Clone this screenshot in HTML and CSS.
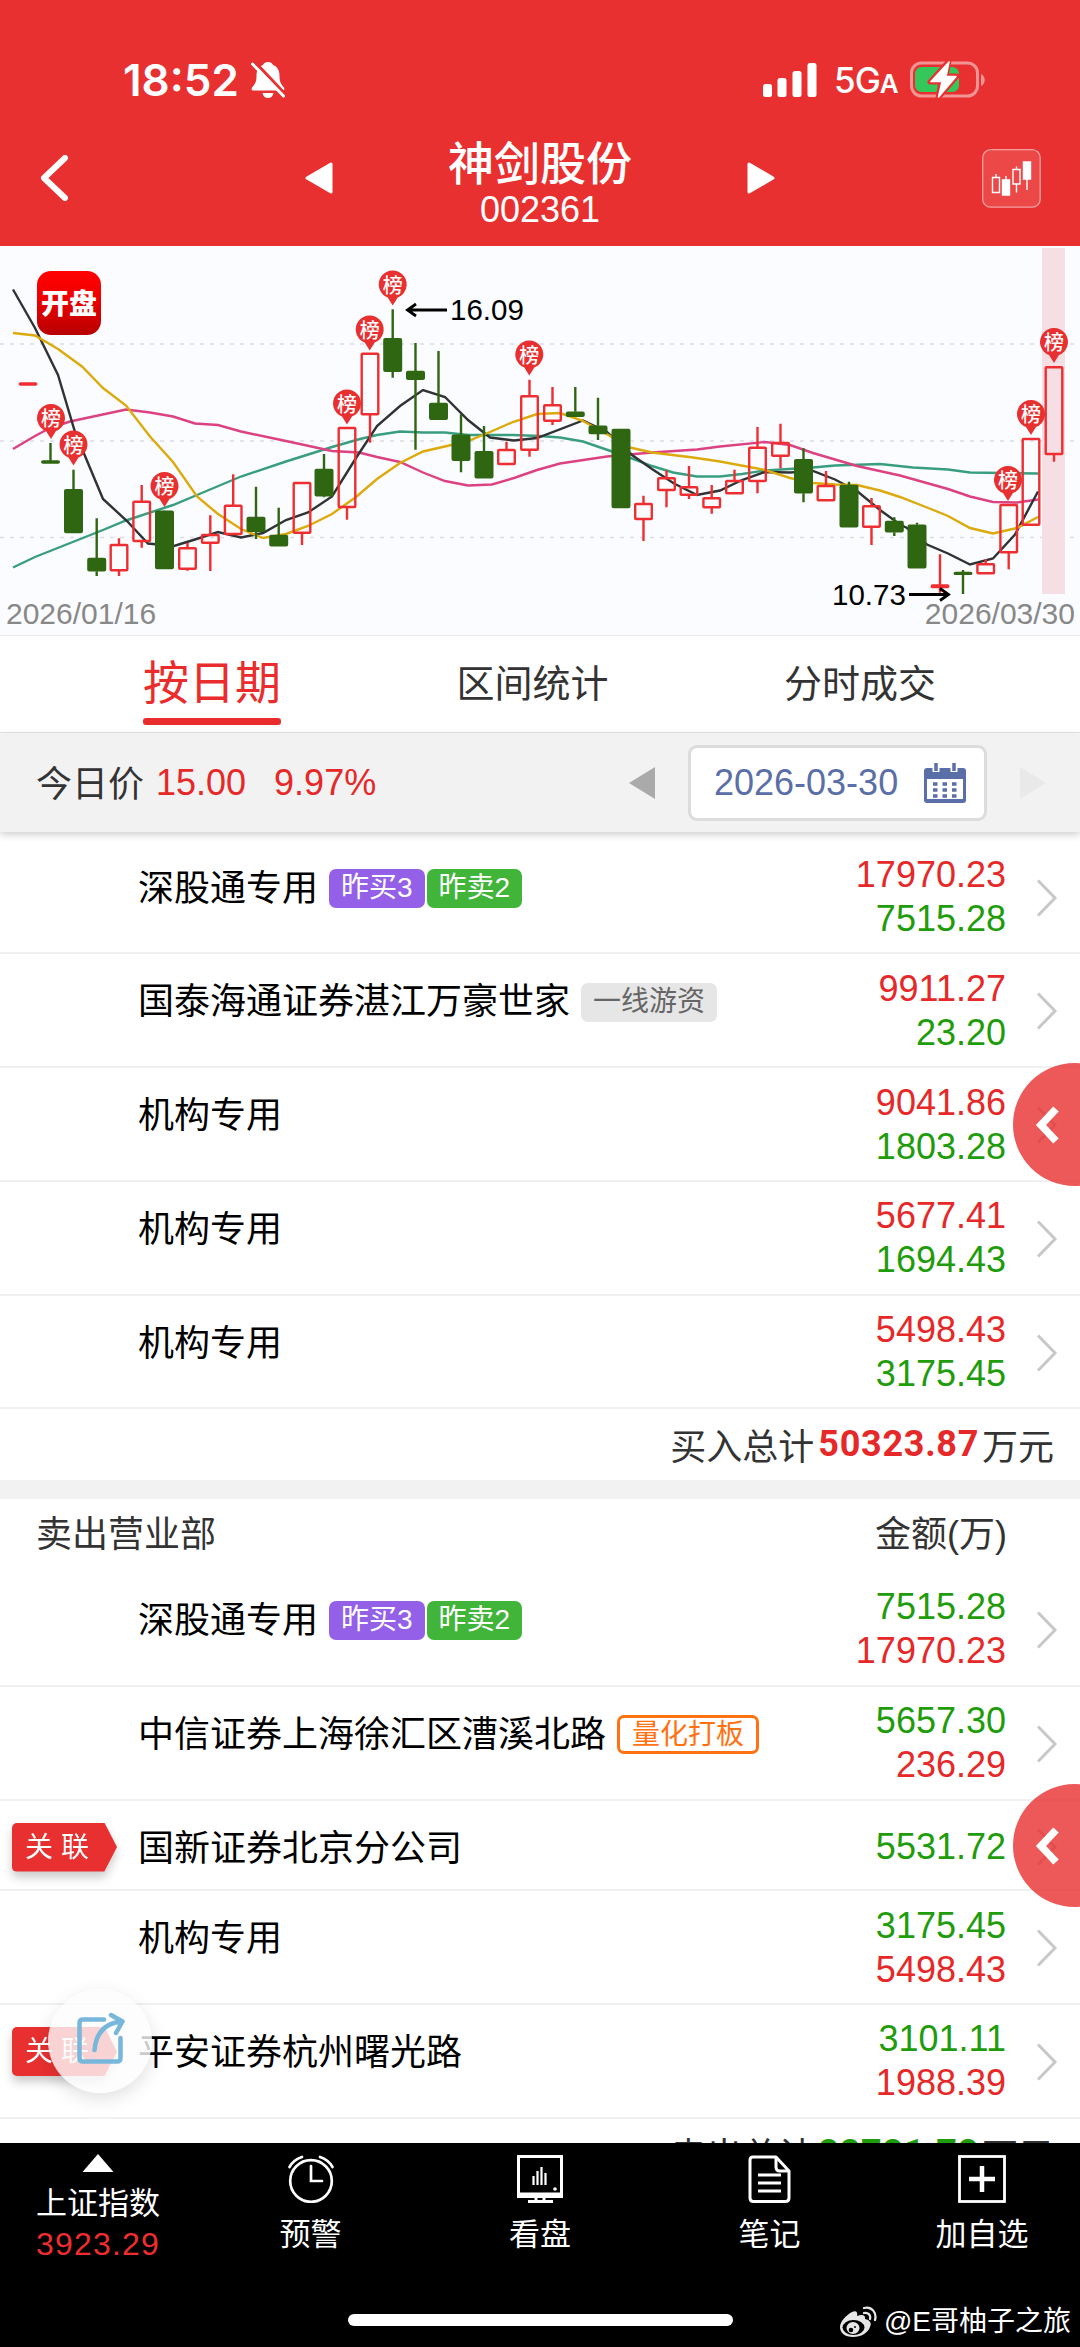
FILE: index.html
```html
<!DOCTYPE html>
<html lang="zh-CN">
<head>
    <meta charset="UTF-8">
    <meta name="viewport" content="width=device-width, initial-scale=1.0">
    <title>神剑股份 002361</title>
    <link rel="stylesheet" href="styles.css">
</head>
<body>
    <div class="page">
        <header class="header">
            <div class="status">
                <span class="time">18:52</span>
                <svg class="bell" width="36" height="40" viewBox="0 0 36 40">
                    <path d="M18 2c-3 0-4.500 1.500-5 3C8 7 6.500 11 6.500 16c0 7-2 8-4.500 11.500C1.200 29 1.600 30.500 3.500 30.500h29c2 0 2.300-1.500 1.300-3C31.500 24 29.500 23 29.500 16c0-5-1.500-9-6.500-11-.500-1.500-2-3-5-3zM12.500 33h11c-.500 3-2.500 5-5.500 5s-5-2-5.500-5z" fill="#fff"/>
                    <path d="M5 2l31 33" stroke="#e83030" stroke-width="3"/>
                    <path d="M2.500 4l31 32" stroke="#fff" stroke-width="3" stroke-linecap="round"/>
                </svg>
                <svg class="signal" width="54" height="34" viewBox="0 0 54 34" fill="#fff">
                    <rect x="0" y="21" width="9" height="13" rx="2.500"/>
                    <rect x="14.500" y="15" width="9" height="19" rx="2.500"/>
                    <rect x="29.500" y="8" width="9" height="26" rx="2.500"/>
                    <rect x="44.500" y="0" width="9" height="34" rx="2.500"/>
                </svg>
                <span class="network">5G<small>A</small></span>
                <svg class="battery" width="78" height="40" viewBox="0 0 78 40">
                    <rect x="2.500" y="3" width="66" height="33" rx="10" fill="none" stroke="#f39393" stroke-width="3"/>
                    <path d="M72 14c5 2 5 10 0 12z" fill="#f39393"/>
                    <rect x="6" y="7" width="44" height="25" rx="6.500" fill="#34c759"/>
                    <path d="M40 1L21 22h11l-3 16 19-22H37z" fill="#fff" stroke="#e83030" stroke-width="5" stroke-linejoin="round"/>
                    <path d="M40 2L22 21.500h11L29.500 37 47 16.500H37z" fill="#fff" stroke="#fff" stroke-width="1.500" stroke-linejoin="round"/>
                </svg>
            </div>
            <div class="nav">
                <svg class="back" width="32" height="46" viewBox="0 0 32 46"><path d="M27 3L6 23l21 20" fill="none" stroke="#fff" stroke-width="6" stroke-linecap="round" stroke-linejoin="round"/></svg>
                <svg class="prev" width="28" height="32" viewBox="0 0 28 32"><path d="M26 2v28L2 16z" fill="#fff" stroke="#fff" stroke-width="3" stroke-linejoin="round"/></svg>
                <div class="stock">
                    <h1>神剑股份</h1>
                    <p>002361</p>
                </div>
                <svg class="next" width="28" height="32" viewBox="0 0 28 32"><path d="M2 2v28l24-14z" fill="#fff" stroke="#fff" stroke-width="3" stroke-linejoin="round"/></svg>
                <svg class="kline" width="59" height="59" viewBox="0 0 59 59">
                    <rect x=".7" y=".7" width="57.500" height="57.500" rx="8" fill="#ec4848" stroke="#f4a0a0" stroke-width="1.300"/>
                    <g fill="none" stroke="#fff" stroke-width="1.400">
                        <path d="M10.500 28.500h7v15h-7zM14 25v3M31 20.500h7v14.500h-7zM34.500 17.500v3M34.500 35v8.500M24 27v4M45 30v11"/>
                        <path d="M20.500 31h7v15h-7zM41.500 13h7v17h-7z" fill="#fff"/>
                    </g>
                </svg>
            </div>
        </header>

        <svg id="chart" class="chart" width="1080" height="389" viewBox="0 246 1080 389">
            <defs>
                <linearGradient id="logo" x1="0" y1="0" x2="0" y2="1">
                    <stop offset="0" stop-color="#ff0202"/>
                    <stop offset=".4" stop-color="#f00000"/>
                    <stop offset="1" stop-color="#b80000"/>
                </linearGradient>
            </defs>
            <path class="gridline" d="M0 344H1080M0 441H1080M0 537.500H1080"/>
            <rect x="1042" y="248" width="23" height="346" fill="#f6dfe4"/>
            <polyline class="ma ma60" points="13,567.5 35,557 103,530 126,520.5 173,505 197,495 241,476.5 286,461.5 332,447 360,439 377,435 400,431.5 423,432.5 445,432.5 468,435 513,435 540,436 560,437.5 583,441.5 612,451.5 632,458.5 652,466 673,472.5 697,476.5 720,476.5 742,474 765,470.5 813,467.5 835,465.5 880,464 913,467.5 948,469.5 970,472.5 1038,473.5"/>
            <polyline class="ma ma20" points="13,449 35,436 50,428 70,421.5 126,409.5 150,412.5 173,416.5 195,423.5 218,425 241,431.5 286,441 332,451 359,452.5 377,457 400,462 423,472.5 445,481 468,485.5 492,484.5 514,478 537,470 560,463.5 607,456.5 652,452.5 697,449.5 720,446.5 765,442 790,445 813,453 857,466 900,475.5 948,489 970,496.5 993,502 1017,502.5 1038,499.5"/>
            <polyline class="ma ma5" points="13,289.5 35,328 58,375 75,432 103,499 127,521 148,543.5 174,546 195,539.5 218,532 241,537.5 263,533 286,520 308,512.5 332,496.5 356,458 377,426 400,406 423,390 445,397 468,420 490,437.5 514,440.5 537,438 583,420.5 607,432 632,455 652,469 674,483.5 697,495 720,490.5 742,480 765,472 790,472.5 813,471 835,479.5 857,491 880,510 900,524.5 907,528 927,544.5 948,553.5 970,564.5 993,558.5 1015,534.5 1038,491.5"/>
            <polyline class="ma ma10" points="13,333 35,335.5 58,349 82,366.5 103,388 126,405.5 150,436.5 173,462 197,496.5 218,514 241,529 263,538 286,534 308,526 332,514 356,497 377,479 400,463 423,451.5 447,446 468,441 490,432 513,422 537,414 560,413 582,420.5 612,437 630,447.5 652,452.5 693,457.5 720,461.5 765,470 790,478 813,483 835,484.5 857,485 880,490.5 900,497 927,507.5 948,516 970,528 993,533.5 1017,528 1038,517"/>
            <g id="candles"></g>
            <g id="pins"></g>
            <rect x="37" y="271" width="64" height="64" rx="14" fill="url(#logo)"/>
            <text class="logo-text" x="69" y="314">开盘</text>
            <path class="arrow" d="M447 310h-39M416 304l-8.500 6 8.500 6"/>
            <text class="price" x="450" y="319.500">16.09</text>
            <path class="arrow" d="M909 594.500h39M940 588.500l8.500 6-8.500 6"/>
            <text class="price" x="832" y="604.500">10.73</text>
            <text class="date" x="6" y="624">2026/01/16</text>
            <text class="date" x="1075" y="624" text-anchor="end">2026/03/30</text>
        </svg>

        <nav class="tabs">
            <span class="tab active">按日期</span>
            <span class="tab">区间统计</span>
            <span class="tab">分时成交</span>
        </nav>

        <div class="today">
            <span class="today-label">今日价</span>
            <span class="up">15.00</span>
            <span class="up percent">9.97%</span>
            <svg class="day-prev" width="28" height="34" viewBox="0 0 28 34"><path d="M27 1v32L1 17z" fill="#aaa"/></svg>
            <div class="picker">
                <span>2026-03-30</span>
                <svg width="42" height="40" viewBox="0 0 42 40">
                    <path d="M3 5h36q3 0 3 3v29q0 3-3 3H3q-3 0-3-3V8q0-3 3-3z" fill="#5a6fa8"/>
                    <path d="M3 16h36v20H3z" fill="#fff"/>
                    <path d="M12 0v9M30 0v9" stroke="#fff" stroke-width="7"/>
                    <path d="M12 0v8M30 0v8" stroke="#5a6fa8" stroke-width="3.500"/>
                    <path d="M9 21h24M9 27h24M9 33h24" stroke="#5a6fa8" stroke-width="3.500" stroke-dasharray="4.500 5"/>
                </svg>
            </div>
            <svg class="day-next" width="28" height="34" viewBox="0 0 28 34"><path d="M1 1v32l26-16z" fill="#e9e9e9"/></svg>
        </div>

        <main class="content">
            <section class="list">
                <div class="row">
                    <div class="name">深股通专用<i class="tag purple">昨买3</i><i class="tag green">昨卖2</i></div>
                    <div class="amount"><p class="up">17970.23</p><p class="down">7515.28</p></div>
                    <svg class="chevron" viewBox="0 0 22 38"><path d="M2 1.500L19 19 2 36.500"/></svg>
                </div>
                <div class="row">
                    <div class="name">国泰海通证券湛江万豪世家<i class="tag gray">一线游资</i></div>
                    <div class="amount"><p class="up">9911.27</p><p class="down">23.20</p></div>
                    <svg class="chevron" viewBox="0 0 22 38"><path d="M2 1.500L19 19 2 36.500"/></svg>
                </div>
                <div class="row">
                    <div class="name">机构专用</div>
                    <div class="amount"><p class="up">9041.86</p><p class="down">1803.28</p></div>
                    <svg class="chevron" viewBox="0 0 22 38"><path d="M2 1.500L19 19 2 36.500"/></svg>
                </div>
                <div class="row">
                    <div class="name">机构专用</div>
                    <div class="amount"><p class="up">5677.41</p><p class="down">1694.43</p></div>
                    <svg class="chevron" viewBox="0 0 22 38"><path d="M2 1.500L19 19 2 36.500"/></svg>
                </div>
                <div class="row">
                    <div class="name">机构专用</div>
                    <div class="amount"><p class="up">5498.43</p><p class="down">3175.45</p></div>
                    <svg class="chevron" viewBox="0 0 22 38"><path d="M2 1.500L19 19 2 36.500"/></svg>
                </div>
                <div class="total">买入总计<b class="up">50323.87</b>万元</div>
            </section>

            <section class="list sell">
                <div class="list-head"><span>卖出营业部</span><span>金额(万)</span></div>
                <div class="row">
                    <div class="name">深股通专用<i class="tag purple">昨买3</i><i class="tag green">昨卖2</i></div>
                    <div class="amount"><p class="down">7515.28</p><p class="up">17970.23</p></div>
                    <svg class="chevron" viewBox="0 0 22 38"><path d="M2 1.500L19 19 2 36.500"/></svg>
                </div>
                <div class="row">
                    <div class="name">中信证券上海徐汇区漕溪北路<i class="tag orange">量化打板</i></div>
                    <div class="amount"><p class="down">5657.30</p><p class="up">236.29</p></div>
                    <svg class="chevron" viewBox="0 0 22 38"><path d="M2 1.500L19 19 2 36.500"/></svg>
                </div>
                <div class="row single">
                    <div class="linked"><span>关联</span></div>
                    <div class="name">国新证券北京分公司</div>
                    <div class="amount"><p class="down">5531.72</p></div>
                    <svg class="chevron" viewBox="0 0 22 38"><path d="M2 1.500L19 19 2 36.500"/></svg>
                </div>
                <div class="row">
                    <div class="name">机构专用</div>
                    <div class="amount"><p class="down">3175.45</p><p class="up">5498.43</p></div>
                    <svg class="chevron" viewBox="0 0 22 38"><path d="M2 1.500L19 19 2 36.500"/></svg>
                </div>
                <div class="row">
                    <div class="linked"><span>关联</span></div>
                    <div class="name">平安证券杭州曙光路</div>
                    <div class="amount"><p class="down">3101.11</p><p class="up">1988.39</p></div>
                    <svg class="chevron" viewBox="0 0 22 38"><path d="M2 1.500L19 19 2 36.500"/></svg>
                </div>
                <div class="total">卖出总计<b class="down">22721.72</b>万元</div>
            </section>
        </main>

        <footer class="footer">
            <div class="item index">
                <svg width="32" height="18" viewBox="0 0 32 18"><path d="M16 0l15.500 18H.5z" fill="#fff"/></svg>
                <span>上证指数</span>
                <span class="index-value">3923.29</span>
            </div>
            <div class="item">
                <svg width="48" height="48" viewBox="0 0 48 48" fill="none" stroke="#fff" stroke-width="2.700" stroke-linecap="round">
                    <circle cx="24" cy="26" r="20.800"/>
                    <path d="M24 11v15h11M2.500 12C5 7.500 9 4 15 2M45.500 12C43 7.500 39 4 33 2"/>
                </svg>
                <span>预警</span>
            </div>
            <div class="item">
                <svg width="48" height="48" viewBox="0 0 48 48" fill="none" stroke="#fff" stroke-width="3">
                    <path d="M2.500 1.500h43v40h-43zM2 39h44M20 42v4M28 42v4M12 46.500h25"/>
                    <path d="M17.500 30v-9M21.500 30V16M25.500 30V12M29.500 30V18" stroke-width="2.200"/>
                    <circle cx="39" cy="34" r="1.800" fill="#fff" stroke="none"/>
                </svg>
                <span>看盘</span>
            </div>
            <div class="item">
                <svg width="48" height="48" viewBox="0 0 48 48" fill="none" stroke="#fff" stroke-width="3" stroke-linejoin="round">
                    <path d="M7 2h23l13 14v27q0 3.500-3.500 3.500h-32Q4 46.500 4 43V5q0-3 3-3z"/>
                    <path d="M30 2v10q0 4 4 4h9M12 20h23M12 28h23M12 36h23"/>
                </svg>
                <span>笔记</span>
            </div>
            <div class="item">
                <svg width="48" height="48" viewBox="0 0 48 48" fill="none" stroke="#fff">
                    <rect x="1.500" y="1.500" width="45" height="45" stroke-width="2.800"/>
                    <path d="M24 11v26M11 24h26" stroke-width="4.500"/>
                </svg>
                <span>加自选</span>
            </div>
            <div class="home-bar"></div>
        </footer>

        <div class="side side-buy"><svg width="26" height="40" viewBox="0 0 26 40"><path d="M22 4L7 20l15 16"/></svg></div>
        <div class="side side-sell"><svg width="26" height="40" viewBox="0 0 26 40"><path d="M22 4L7 20l15 16"/></svg></div>
        <div class="share">
            <svg width="50" height="52" viewBox="0 0 50 52" fill="none" stroke="#77b7dc" stroke-width="4.500" stroke-linecap="round" stroke-linejoin="round">
                <path d="M28 7.500H7q-3.500 0-3.500 3.500v35q0 3.500 3.500 3.500h34q3.500 0 3.500-3.500V26M18.500 38C20 22 28 11 46 9.500M35 3l11.500 6.500L40 21"/>
            </svg>
        </div>
        <div class="watermark">
            <svg width="38" height="32" viewBox="0 0 38 32">
                <path d="M13 6c4-2 6 0 5 4 5-2 9-1 8 3 5 1 7 4 5 8-2 6-9 10-17 10C6 31 1 27 1 21 1 16 7 9 13 6z" fill="#e6e6e6"/>
                <ellipse cx="14.500" cy="21.500" rx="11" ry="7.500" fill="#000"/>
                <ellipse cx="14" cy="22" rx="6.500" ry="6" fill="#e6e6e6"/>
                <circle cx="12" cy="24" r="2.300" fill="#000"/><circle cx="16" cy="21" r="1" fill="#000"/>
                <path d="M25 7c4-1 7 2 6 6M25 2c8-2 13 5 11 12" fill="none" stroke="#e6e6e6" stroke-width="2.300" stroke-linecap="round"/>
            </svg>
            <span>@E哥柚子之旅</span>
        </div>
    </div>
    <script src="chart.js"></script>
</body>
</html>
```
FILE: styles.css
```css
* {
    box-sizing: border-box;
}

body {
    margin: 0;
    background: #fff;
    color: #000;
    font-family: "Liberation Sans", "Noto Sans CJK SC", sans-serif;
    font-size: 36px;
}

h1, p {
    margin: 0;
}

svg {
    display: block;
    flex-shrink: 0;
}

.page {
    position: relative;
    display: flex;
    flex-direction: column;
    width: 1080px;
    height: 2347px;
    overflow: hidden;
}

.up {
    color: #e62828;
}

.down {
    color: #1f9c0b;
}

/* Header */
.header {
    height: 246px;
    flex-shrink: 0;
    background: #e83030;
    color: #fff;
}

.status {
    display: flex;
    align-items: center;
    height: 110px;
    padding: 50px 93px 0 123px;
    font-family: Inter, sans-serif;
}

.time {
    font-size: 44px;
    font-weight: 600;
}

.bell {
    margin-left: 11px;
}

.signal {
    margin-left: auto;
}

.network {
    margin-left: 17px;
    font-size: 35px;
    font-weight: 500;
    letter-spacing: -1px;
    width: 60px;
    white-space: nowrap;
}

.network small {
    font-size: 26px;
    font-weight: 600;
}

.battery {
    margin-left: 15px;
}

.nav {
    display: flex;
    align-items: center;
    height: 136px;
    padding: 0 39px 0 38px;
}

.prev {
    margin-left: 235px;
}

.stock {
    flex: 1;
    padding-top: 9px;
    text-align: center;
}

.stock h1 {
    font-size: 46px;
    font-weight: 500;
    line-height: 54px;
}

.stock p {
    line-height: 38px;
}

.kline {
    margin-left: 207px;
}

/* Chart */
.chart {
    background: #fbfcff;
}

.gridline {
    stroke: #dcdce2;
    stroke-width: 1.500;
    stroke-dasharray: 4 6;
}

.ma {
    fill: none;
    stroke-width: 2.400;
}

.ma5 { stroke: #303334; }
.ma10 { stroke: #dcaa0c; }
.ma20 { stroke: #dc4182; }
.ma60 { stroke: #389e7e; }

.candle-up {
    fill: none;
    stroke: #ee2e31;
    stroke-width: 2.400;
}

.candle-down {
    fill: #2f6612;
    stroke: #2f6612;
    stroke-width: 2.400;
}

.pin {
    fill: #e83030;
}

.pin-text {
    fill: #fff;
    font-size: 20px;
    font-weight: 500;
    text-anchor: middle;
}

.logo-text {
    fill: #fff;
    font-size: 28px;
    font-weight: 900;
    text-anchor: middle;
}

.arrow {
    fill: none;
    stroke: #000;
    stroke-width: 2.800;
}

.price {
    font-size: 29.500px;
}

.date {
    fill: #888;
    font-size: 30px;
}

/* Tabs */
.tabs {
    display: grid;
    grid-template-columns: 324px 317px 338px;
    height: 98px;
    flex-shrink: 0;
    padding-left: 50px;
    border-top: 1px solid #e8e8ea;
    border-bottom: 1px solid #e4e4e4;
}

.tab {
    justify-self: center;
    color: #333;
    font-size: 38px;
    line-height: 96px;
}

.tab.active {
    display: flex;
    flex-direction: column;
    height: 89px;
    color: #ea2c2c;
    font-size: 46px;
    line-height: 95px;
}

.tab.active::after {
    content: "";
    height: 7px;
    margin-top: -13px;
    border-radius: 3px;
    background: #ea2c2c;
}

/* Price and date line */
.today {
    position: relative;
    display: flex;
    align-items: center;
    height: 99px;
    flex-shrink: 0;
    padding: 0 33px 0 36px;
    background: #f2f2f2;
    box-shadow: 0 3px 7px rgba(0, 0, 0, 0.18);
}

.today-label {
    width: 120px;
    padding-bottom: 3px;
    color: #333;
}

.percent {
    margin-left: 28px;
}

.day-prev {
    margin-left: auto;
}

.picker {
    display: flex;
    align-items: center;
    justify-content: space-between;
    width: 299px;
    height: 76px;
    margin: 0 32px 0 32px;
    padding: 0 18px 0 23px;
    border: 3px solid #dcdcdc;
    border-radius: 9px;
    background: #fff;
    color: #5a6fa8;
}

/* Lists */
.content {
    flex: 1;
    min-height: 0;
    padding-top: 8.500px;
    overflow: hidden;
}

.row {
    position: relative;
    display: flex;
    align-items: flex-start;
    height: 113.800px;
    padding: 0 22px 0 138px;
    border-bottom: 2px solid #f0f0f0;
}

.name {
    display: flex;
    align-items: center;
    flex: 1;
    height: 94px;
    padding-bottom: 6px;
    white-space: nowrap;
}

.tag {
    height: 39px;
    margin: 8px 0 0 2px;
    padding: 0 12px;
    border-radius: 7px;
    color: #fff;
    font-size: 28px;
    font-style: normal;
    line-height: 37px;
}

.tag:first-child {
    margin-left: 11px;
}

.purple {
    background: #9560e8;
}

.green {
    background: #40b53a;
}

.gray {
    background: #e6e6e6;
    color: #666;
}

.orange {
    border: 3px solid #ff7212;
    color: #ff7212;
    line-height: 33px;
}

.amount {
    padding-top: 12.500px;
    line-height: 44px;
    text-align: right;
}

.chevron {
    width: 22px;
    height: 38px;
    margin: 38px 0 0 30px;
    fill: none;
    stroke: #c8c8c8;
    stroke-width: 3;
}

.single {
    height: 90.500px;
}

.single .amount {
    padding-top: 24px;
}

.single .chevron {
    margin-top: 27px;
}

/* Red ribbon that lies in the left margin of a row */
.linked {
    position: absolute;
    left: 12px;
    top: 22px;
    filter: drop-shadow(0 6px 5px rgba(0, 0, 0, 0.2));
}

.linked span {
    display: block;
    width: 105px;
    height: 49px;
    padding-left: 13px;
    border-radius: 5px;
    background: #e83030;
    clip-path: polygon(0 0, 88% 0, 100% 50%, 88% 100%, 0 100%);
    color: #fff;
    font-size: 28px;
    letter-spacing: 8px;
    line-height: 49px;
}

.total {
    display: flex;
    align-items: center;
    justify-content: flex-end;
    height: 71px;
    padding: 0 26px 2px 0;
    color: #333;
}

.total b {
    margin: 0 3px 0 4px;
    font-family: Roboto, sans-serif;
    letter-spacing: 0.700px;
}

.sell {
    border-top: 19px solid #f2f2f2;
}

.list-head {
    display: flex;
    justify-content: space-between;
    height: 73.500px;
    padding: 0 73px 0 36px;
    color: #333;
    line-height: 71px;
}

/* Bottom bar */
.footer {
    display: grid;
    grid-template-columns: 196px 229px 230px 229px 196px;
    grid-template-rows: 150px 1fr;
    height: 204px;
    flex-shrink: 0;
    background: #000;
    color: #fff;
    font-size: 31px;
}

.item {
    display: flex;
    flex-direction: column;
    align-items: center;
    gap: 10px;
    padding-top: 12px;
    line-height: 44px;
}

.item:last-of-type {
    padding-right: 2px;
}

.index {
    padding-top: 11px;
}

.index-value {
    margin-top: -14px;
    color: #ee2e2e;
    font-size: 32px;
    letter-spacing: 1.200px;
}

.home-bar {
    grid-column: 1 / -1;
    justify-self: center;
    width: 385px;
    height: 12px;
    margin-top: 21px;
    border-radius: 6px;
    background: #fff;
}

/* Floating elements */
.side {
    position: absolute;
    left: 1013px;
    display: flex;
    align-items: center;
    width: 123px;
    height: 123px;
    padding-left: 21px;
    border-radius: 50%;
    background: rgba(232, 48, 48, 0.8);
}

.side path {
    fill: none;
    stroke: #fff;
    stroke-width: 7.500;
}

.side-buy {
    top: 1063px;
}

.side-sell {
    top: 1784px;
}

.share {
    position: absolute;
    left: 48px;
    top: 1989px;
    width: 104px;
    height: 104px;
    padding: 23px 0 0 28px;
    border-radius: 50%;
    background: rgba(253, 253, 253, 0.8);
    box-shadow: 0 6px 18px rgba(0, 0, 0, 0.12);
}

.watermark {
    position: absolute;
    right: 9px;
    top: 2300px;
    display: flex;
    align-items: center;
    gap: 7px;
    color: #fff;
    font-size: 28px;
    line-height: 44px;
}
```
FILE: chart.js
```javascript
const SVG_NS = 'http://www.w3.org/2000/svg';

// [x, high, body top, body bottom, low, up]
const candles = [
    [28, 384, 383.5, 384.5, 384, 1],
    [50.5, 443, 461.5, 462.5, 462, 0],
    [73.5, 469.7, 489.3, 533, 533, 0],
    [96.7, 518.3, 558, 571.3, 576, 0],
    [119, 538.3, 545, 570.3, 576, 1],
    [141.7, 485, 501.7, 541, 547.7, 1],
    [164.5, 511, 510.7, 569, 569, 0],
    [187.5, 542.7, 548.3, 568.7, 570.7, 1],
    [210.3, 515.3, 535, 542.7, 571, 1],
    [233.2, 474.3, 505.7, 534, 534, 1],
    [256, 486.7, 517, 531.7, 539, 0],
    [278.7, 507.7, 535, 546.3, 546.3, 0],
    [302, 483, 483, 532.7, 545, 1],
    [324, 454, 469, 496.3, 497.3, 0],
    [347, 428, 428, 507, 519.7, 1],
    [370, 353.7, 353.7, 414.3, 442.7, 1],
    [392.7, 309.3, 338.3, 371.7, 377.7, 0],
    [415.5, 343, 371, 379.7, 449.7, 0],
    [438.5, 351, 403, 419.7, 420, 0],
    [461, 414.3, 434.7, 460.7, 472.3, 0],
    [484, 426, 451.3, 478.3, 478.3, 0],
    [506.5, 441.7, 450, 464, 464, 1],
    [529.5, 379.7, 396.3, 449.7, 456.7, 1],
    [552.5, 387, 405.3, 420.7, 425, 1],
    [575.3, 387, 411.7, 416.7, 416.7, 0],
    [598, 397.7, 425.7, 434, 440, 0],
    [621, 429, 429, 508, 508, 0],
    [643.5, 495.7, 504, 519, 541, 1],
    [666.5, 470.3, 478.3, 490, 507.3, 1],
    [689, 466, 487.3, 494.7, 499, 1],
    [711.7, 485, 498.3, 507.3, 513.7, 1],
    [734.5, 469.7, 481, 493.3, 493.3, 1],
    [757.5, 427, 447.7, 481, 493.3, 1],
    [780.5, 423.7, 443, 455.7, 468.3, 1],
    [803.5, 448.3, 459.3, 493.3, 502.3, 0],
    [826, 471, 486, 500.3, 500.3, 1],
    [849, 481.7, 485, 527.3, 527.3, 0],
    [871.5, 498, 506.3, 526.7, 545, 1],
    [894.3, 517.3, 521, 532.3, 536, 0],
    [917, 522.7, 524.7, 568.3, 568.3, 0],
    [940, 554.3, 585.5, 587, 592.7, 1],
    [963, 570, 573, 573.8, 594, 0],
    [985.7, 559.3, 564.3, 573.3, 573.3, 1],
    [1008.7, 505, 505, 552.3, 569.3, 1],
    [1031, 439, 439, 524.7, 524.7, 1],
    [1054, 367.3, 367.3, 454, 461.7, 1]
];

// [x, y of the tip]
const pins = [
    [51, 439], [73.5, 465.5], [164.5, 507], [347, 424.5], [369.7, 350.5],
    [392.7, 305.5], [529.3, 375.5], [1008, 501], [1031, 435], [1054, 363]
];

function add(parent, tag, attrs) {
    const el = document.createElementNS(SVG_NS, tag);
    for (const key in attrs) {
        el.setAttribute(key, attrs[key]);
    }
    parent.appendChild(el);
    return el;
}

const candleLayer = document.getElementById('candles');
candles.forEach(([x, high, top, bottom, low, up]) => {
    const g = add(candleLayer, 'g', { class: up ? 'candle-up' : 'candle-down' });
    add(g, 'path', { d: `M${x} ${high}V${top}M${x} ${bottom}V${low}` });
    // green bodies are drawn from their outer edge, red ones from the middle of the outline
    const inset = up || bottom - top < 2 ? 0 : 1;
    add(g, 'rect', {
        x: x - 8.3, y: top + inset, width: 16.6,
        height: bottom - top - inset * 2, rx: 0.8
    });
});

const pinLayer = document.getElementById('pins');
pins.forEach(([x, y]) => {
    add(pinLayer, 'path', {
        class: 'pin',
        d: `M${x} ${y}l-5 -8A14 14 0 1 1 ${x + 5} ${y - 8}z`
    });
    add(pinLayer, 'text', { class: 'pin-text', x: x, y: y - 13 }).textContent = '榜';
});
```
